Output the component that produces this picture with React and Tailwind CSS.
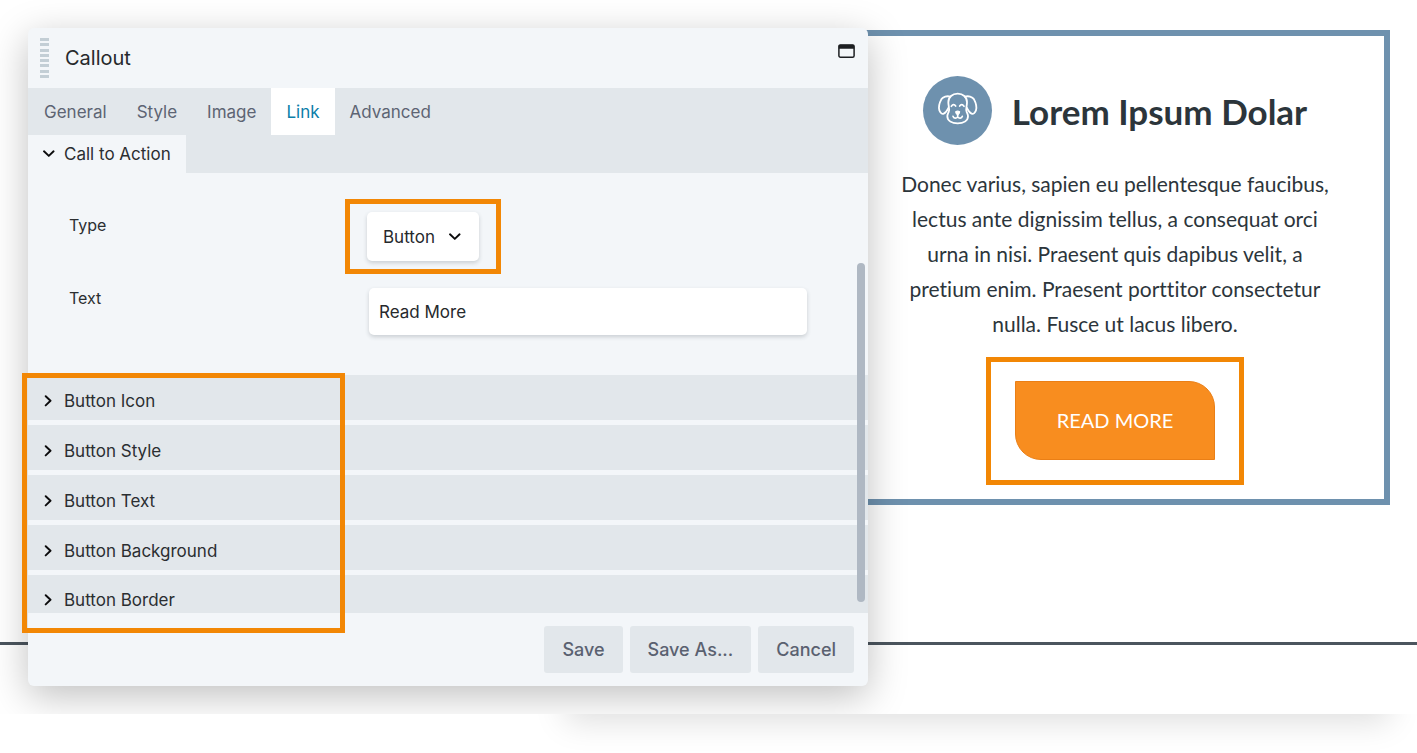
import React from "react";

const tabs = ["General", "Style", "Image", "Link", "Advanced"];
const sections = ["Button Icon", "Button Style", "Button Text", "Button Background", "Button Border"];

function Chevron({ down = false }) {
  return (
    <svg className="h-3 w-3 shrink-0" viewBox="0 0 12 12" fill="none" stroke="#0b0b0c" strokeWidth="1.9" strokeLinecap="round" strokeLinejoin="round" aria-hidden="true">
      <path d={down ? "M1 3.300 5.800 7.900l4.800-4.600" : "M2.700 1.200 7.500 5.800l-4.800 4.600"} />
    </svg>
  );
}

function WindowIcon() {
  return (
    <svg className="h-[14px] w-[17px]" viewBox="0 0 17 14" aria-hidden="true">
      <rect x="0.900" y="0.900" width="15.200" height="12.300" rx="1.500" fill="none" stroke="#1d1f22" strokeWidth="1.500" />
      <path d="M0.800 1.800Q.8.700 2 .7H15q1.200 0 1.200 1.100V4.800H.8z" fill="#1d1f22" />
    </svg>
  );
}

function DogIcon() {
  return (
    <svg className="h-[69px] w-[69px] shrink-0 rounded-full bg-[#6e91ae]" viewBox="0 0 207 207" fill="none" stroke="#fff" strokeWidth="5.500" strokeLinecap="round" strokeLinejoin="round" aria-hidden="true">
      <path d="M104 53C88 53 76 63 76 79C76 93 81 99 77 108C75 113 73 115 73 121C73 135 87 142 104 142S135 135 135 121C135 115 133 113 131 108C127 99 132 93 132 79C132 63 120 53 104 53Z" />
      <path d="M82 62C72 59 60 62 55 70C49 81 46 92 49 103C51 110 57 115 62 113C69 111 72 104 76 96" />
      <path d="M126 62C136 59 148 62 153 70C159 81 162 92 159 103C157 110 151 115 146 113C139 111 136 104 132 96" />
      <path d="M85 91Q92 81 98 90M110 90Q116 81 123 91" strokeWidth="5" />
      <path d="M98 107Q104 104 110 107Q111 111 104 117Q97 111 98 107Z" fill="#fff" strokeWidth="3.500" />
      <path d="M104 116V122M90 121C92 128 100 128 104 123C108 128 116 128 118 121" strokeWidth="5" />
    </svg>
  );
}

function SettingsDialog() {
  return (
    <section role="dialog" aria-labelledby="dialog-title" className="relative z-10 w-[840px] shrink-0 rounded-md bg-[#f3f6f9] shadow-[0_10px_38px_rgba(0,0,0,0.25)]">
      <header className="flex h-[60px] items-center pl-3 pr-[13px]">
        <div className="flex h-10 w-[9px] flex-col justify-between" aria-hidden="true">
          {[0, 1, 2, 3, 4, 5, 6, 7].map((n) => <span key={n} className="h-[3px] bg-[#c3ced5]" />)}
        </div>
        <h2 id="dialog-title" className="ml-4 flex-1 text-[20px] leading-6 text-[#26292c]">Callout</h2>
        <button type="button" aria-label="Expand window" className="mb-[14px]"><WindowIcon /></button>
      </header>

      <nav role="tablist" className="flex h-[47px] bg-[#e2e7eb] pl-px text-[17px]">
        {tabs.map((t) => (
          <button key={t} type="button" role="tab" aria-selected={t === "Link"} className={t === "Link" ? "bg-white px-[15px] pt-[2px] text-[#0b7ea9]" : "px-[15px] pt-[2px] text-[#5d6473]"}>
            {t}
          </button>
        ))}
      </nav>

      <div className="flex bg-[#e2e7eb]">
        <button type="button" aria-expanded="true" className="flex h-[38px] items-center gap-[9px] bg-[#f3f6f9] px-[15px] text-[17px] text-[#2b2e31]">
          <Chevron down />
          <span className="pt-[2px]">Call to Action</span>
        </button>
      </div>

      <form className="grid grid-cols-[276px_1fr] gap-y-[14px] pb-10 pl-[41px] pr-[61px] pt-[26px]">
        <label htmlFor="link-type" className="pt-4 text-[16px] leading-5 text-[#2b2e31]">Type</label>
        <div className="w-fit border-[5px] border-[#f28705] px-[17px] py-2">
          <div className="relative flex w-28 items-center">
            <select id="link-type" defaultValue="Button" className="h-[49px] w-full appearance-none rounded-[5px] bg-white pl-4 pt-[2px] text-[17px] text-[#26292c] shadow-[0_2px_4px_rgba(40,50,60,0.2)]">
              <option>Button</option>
              <option>Text</option>
              <option>None</option>
            </select>
            <span className="pointer-events-none absolute right-[18px]"><Chevron down /></span>
          </div>
        </div>
        <label htmlFor="link-text" className="text-[16px] leading-5 text-[#2b2e31]">Text</label>
        <div className="pl-6">
          <input id="link-text" type="text" defaultValue="Read More" className="h-[47px] w-full rounded-[5px] bg-white px-[10px] text-[17px] text-[#26292c] shadow-[0_2px_4px_rgba(40,50,60,0.2)]" />
        </div>
      </form>

      <div className="relative">
        <div className="flex flex-col gap-[5px]">
          {sections.map((s) => (
            <button key={s} type="button" aria-expanded="false" className="flex h-[45px] items-center gap-[9px] bg-[#e2e7eb] px-[15px] pt-[6px] text-[17px] text-[#2b2e31] last:h-[38px] last:pt-3">
              <Chevron />
              <span className="pt-[2px]">{s}</span>
            </button>
          ))}
        </div>
        <div className="pointer-events-none absolute -bottom-5 -left-[6px] -top-[2px] w-[323px] border-[5px] border-[#f28705]" />
        <div className="absolute -top-28 bottom-[11px] right-[3px] w-2 rounded-full bg-[#afb8c3]" />
      </div>

      <footer className="flex justify-end gap-[7px] px-[14px] py-[13px] text-[18px] font-medium text-[#5a6170]">
        {["Save", "Save As...", "Cancel"].map((b) => (
          <button key={b} type="button" className="h-[47px] rounded-[3px] bg-[#e2e7eb] px-[18px]">{b}</button>
        ))}
      </footer>
    </section>
  );
}

function CalloutCard() {
  return (
    <article className="-ml-7 mt-[2px] flex min-w-0 flex-1 flex-col items-center border-[6px] border-[#6e91ae] px-8 pb-[14px] pt-10 font-['Lato','Open_Sans',sans-serif] text-[#2c353b] [font-variant-ligatures:none]">
      <div className="flex items-center gap-5">
        <DogIcon />
        <h1 className="whitespace-nowrap text-[35px] font-bold leading-[48px]">Lorem Ipsum Dolar</h1>
      </div>
      <p className="mt-[21px] text-center text-[21px] leading-[35px]">
        Donec varius, sapien eu pellentesque faucibus,<br />
        lectus ante dignissim tellus, a consequat orci<br />
        urna in nisi. Praesent quis dapibus velit, a<br />
        pretium enim. Praesent porttitor consectetur<br />
        nulla. Fusce ut lacus libero.
      </p>
      <div className="mt-4 border-[5px] border-[#f28705] px-6 pb-5 pt-[19px]">
        <a href="#read-more" className="flex h-[79px] w-[200px] items-center justify-center rounded-bl-[26px] rounded-tr-[26px] border border-[#ea7f16] bg-[#f88d1f] pb-px text-[20px] text-white">READ MORE</a>
      </div>
    </article>
  );
}

export default function App() {
  return (
    <div className="overflow-hidden bg-white font-['Inter','Liberation_Sans',sans-serif]">
      <main className="relative flex items-start overflow-hidden pb-7 pl-7 pr-[27px] pt-7">
        <hr className="absolute bottom-[69px] left-0 right-0 border-t-[3px] border-[#4b555e]" />
        <SettingsDialog />
        <CalloutCard />
      </main>
      <div className="h-[39px] overflow-hidden pl-[565px] pr-[27px]">
        <div className="-mt-20 h-20 shadow-[0_8px_32px_rgba(0,0,0,0.13)]" />
      </div>
    </div>
  );
}
